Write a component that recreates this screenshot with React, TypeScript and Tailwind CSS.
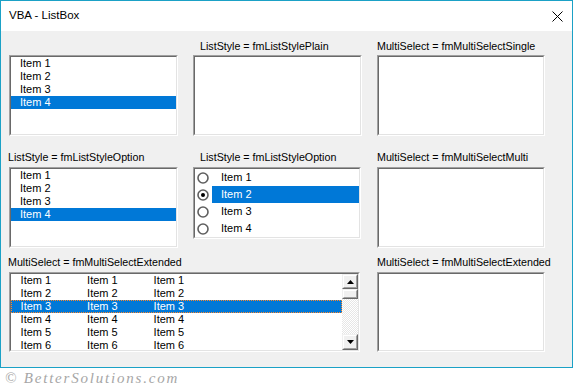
import React from 'react';

const ITEMS = ['Item 1', 'Item 2', 'Item 3', 'Item 4'];
const ROWS = ['Item 1', 'Item 2', 'Item 3', 'Item 4', 'Item 5', 'Item 6'];

interface BoxProps {
  className?: string;
  children?: React.ReactNode;
}

// sunken 3D frame used by every list box
const Box: React.FC<BoxProps> = ({ className = '', children }) => (
  <div className={`border border-t-[#a0a0a0] border-l-[#a0a0a0] border-r-white border-b-white ${className}`}>
    <div className="h-full border border-t-[#696969] border-l-[#696969] border-r-[#e3e3e3] border-b-[#e3e3e3] bg-white overflow-hidden">
      {children}
    </div>
  </div>
);

const Label: React.FC<{ text: string; className?: string }> = ({ text, className = '' }) => (
  <div className={`h-[13px] leading-[13px] text-[10.7px] text-black whitespace-nowrap ${className}`}>{text}</div>
);

const PlainList: React.FC<{ selected: number }> = ({ selected }) => (
  <div className="text-[11px]">
    {ITEMS.map((item, i) => (
      <div
        key={item}
        className={`h-[13px] leading-[13px] pl-[9px] ${i === selected ? 'bg-[#0078d7] text-white' : 'text-black'}`}
      >
        {item}
      </div>
    ))}
  </div>
);

const Radio: React.FC<{ checked: boolean }> = ({ checked }) => (
  <svg width="12" height="12" viewBox="0 0 12 12" className="ml-[2px] shrink-0">
    <circle cx="6" cy="6" r="5" fill="white" stroke="#5f5f5f" strokeWidth="1.6" />
    {checked && <circle cx="6" cy="6" r="2" fill="black" />}
  </svg>
);

const OptionList: React.FC<{ selected: number }> = ({ selected }) => (
  <div className="text-[11px]">
    {ITEMS.map((item, i) => (
      <div key={item} className="h-[17px] flex items-center">
        <div className="w-[17px] h-full flex items-center">
          <Radio checked={i === selected} />
        </div>
        <div
          className={`flex-1 h-full leading-[17px] pl-[9px] ${i === selected ? 'bg-[#0078d7] text-white' : 'text-black'}`}
        >
          {item}
        </div>
      </div>
    ))}
  </div>
);

const ScrollButton: React.FC<{ className?: string; children?: React.ReactNode }> = ({ className = '', children }) => (
  <div className={`border border-t-[#f0f0f0] border-l-[#f0f0f0] border-r-[#696969] border-b-[#696969] ${className}`}>
    <div className="h-full border border-t-white border-l-white border-r-[#a0a0a0] border-b-[#a0a0a0] bg-[#f0f0f0] flex items-center justify-center">
      {children}
    </div>
  </div>
);

const ScrollBar: React.FC = () => (
  <div className="w-[16px] h-full flex flex-col shrink-0">
    <ScrollButton className="h-[15px]">
      <svg width="7" height="4" viewBox="0 0 7 4">
        <path d="M3.5 0L7 4H0z" fill="black" />
      </svg>
    </ScrollButton>
    <ScrollButton className="h-[10px]" />
    <div className="flex-1 bg-[repeating-conic-gradient(#ffffff_0_25%,#e6e6e6_0_50%)] bg-[length:2px_2px]" />
    <ScrollButton className="h-[16px]">
      <svg width="7" height="4" viewBox="0 0 7 4">
        <path d="M0 0H7L3.5 4z" fill="black" />
      </svg>
    </ScrollButton>
  </div>
);

const ColumnList: React.FC<{ selected: number }> = ({ selected }) => (
  <div className="h-full flex">
    <div className="flex-1 text-[11px]">
      {ROWS.map((item, i) => (
        <div
          key={item}
          className={`h-[13px] leading-[13px] flex ${
            i === selected
              ? 'bg-[#0078d7] text-white outline outline-1 outline-dotted outline-[#ff8728] -outline-offset-1'
              : 'text-black'
          }`}
        >
          <div className="w-[66.5px] pl-[9.6px]">{item}</div>
          <div className="w-[66.5px] pl-[9.6px]">{item}</div>
          <div className="w-[66.5px] pl-[9.6px]">{item}</div>
        </div>
      ))}
    </div>
    <ScrollBar />
  </div>
);

export default function App() {
  return (
    <div className="w-[573px] h-[389px] bg-white overflow-hidden font-['Liberation_Sans',Arial,sans-serif]">
      <div className="h-[368px] border border-[#1ba1c6] flex flex-col">
        <div className="h-[30px] bg-white flex items-center justify-between pl-[8px] pr-[9px]">
          <span className="text-[11.5px] text-black">VBA - ListBox</span>
          <svg width="11" height="11" viewBox="0 0 11 11">
            <path d="M0.5 0.5L10.5 10.5M10.5 0.5L0.5 10.5" stroke="black" strokeWidth="1" />
          </svg>
        </div>

        <div className="flex-1 bg-[#f0f0f0] pl-[8px] pt-[9px]">
          {/* row 1 */}
          <div className="flex gap-[15px]">
            <div className="w-[169px]">
              <div className="h-[13px]" />
              <Box className="mt-[2px] h-[81px]">
                <PlainList selected={3} />
              </Box>
            </div>
            <div className="w-[169px]">
              <Label text="ListStyle = fmListStylePlain" className="pl-[7px]" />
              <Box className="mt-[2px] h-[81px]" />
            </div>
            <div className="w-[168px]">
              <Label text="MultiSelect = fmMultiSelectSingle" />
              <Box className="mt-[2px] h-[81px]" />
            </div>
          </div>

          {/* row 2 */}
          <div className="flex gap-[15px] mt-[15px]">
            <div className="w-[169px]">
              <Label text="ListStyle = fmListStyleOption" className="-ml-px" />
              <Box className="mt-[3px] h-[81px]">
                <PlainList selected={3} />
              </Box>
            </div>
            <div className="w-[168px]">
              <Label text="ListStyle = fmListStyleOption" className="pl-[7px]" />
              <Box className="mt-[3px] h-[72px]">
                <OptionList selected={1} />
              </Box>
            </div>
            <div className="w-[168px] ml-px">
              <Label text="MultiSelect = fmMultiSelectMulti" />
              <Box className="mt-[3px] h-[81px]" />
            </div>
          </div>

          {/* row 3 */}
          <div className="flex gap-[17px] mt-[8px]">
            <div className="w-[351px]">
              <Label text="MultiSelect = fmMultiSelectExtended" className="-ml-px" />
              <Box className="mt-[3px] h-[80px]">
                <ColumnList selected={2} />
              </Box>
            </div>
            <div className="w-[168px]">
              <Label text="MultiSelect = fmMultiSelectExtended" />
              <Box className="mt-[3px] h-[80px]" />
            </div>
          </div>
        </div>
      </div>

      <div className="h-[21px] pl-[5px] flex items-center">
        <span className="text-[15px] italic tracking-[1.8px] text-[#a6a6a6] font-['Liberation_Serif',serif]">
          © BetterSolutions.com
        </span>
      </div>
    </div>
  );
}
